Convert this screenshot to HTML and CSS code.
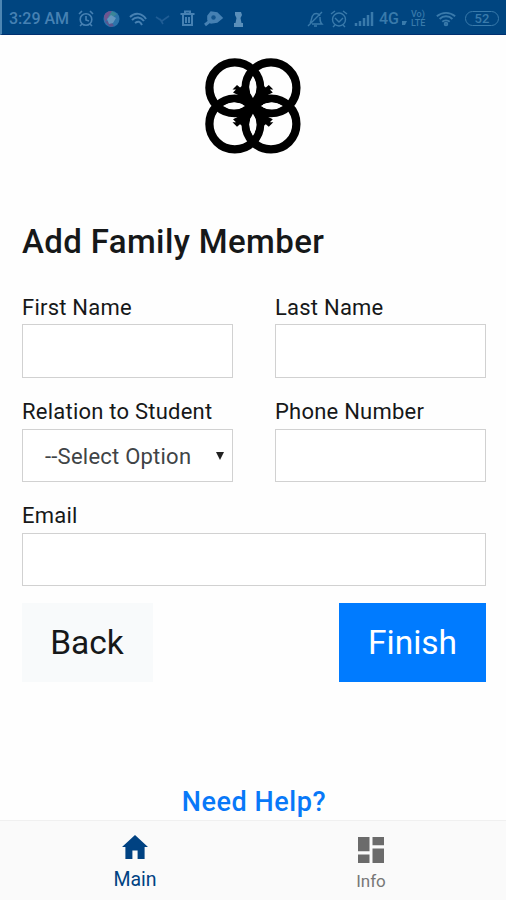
FILE: index.html
```html
<!DOCTYPE html>
<html lang="en">
<head>
<meta charset="utf-8">
<title>Add Family Member</title>
<link rel="stylesheet" href="styles.css">
</head>
<body>
<div class="status">
  <span class="time">3:29 AM</span>
  <svg class="st-left" width="172" height="20" viewBox="0 0 172 20" fill="none" stroke="#4681b3" stroke-width="1.6">
    <circle cx="9" cy="10.5" r="5.800"/><path d="M9 7v4l3 1M2 5l3-3M13 2l3 3M5 15l-2 2M13 15l2 2"/>
    <g stroke="none"><circle cx="34.500" cy="10" r="8" fill="#2c74ab"/><path d="M27 7a8 8 0 0 1 8-5l-2 5-5 6z" fill="#6f5590"/><path d="M35 2l5 3-4 3-5 0z" fill="#3a8598"/><path d="M28 13l5-2 4 6-4 1z" fill="#5a5690"/><path d="M30 10l4-4 5 3-3 5-4 1z" fill="#6496be"/></g>
    <path d="M53 8c5-5 12-4 16 2M55 11c4-4 9-3 12 1M58 14c3-2 5-2 7 2" stroke-width="2"/>
    <path d="M79 8l6 4 7-5M83 10l3 5" stroke="#1f5d95"/>
    <path d="M103.500 5h14M108 4V2.500h5V4M106 6v10h9V6M109 8v6M112 8v6" stroke-width="2"/>
    <path d="M128 16l5-4" stroke-width="3"/><path d="M131 7l3-4 6 1 5 5-5 4-6 1-3-3z" fill="#4681b3"/><circle cx="136.500" cy="8.500" r="2.200" stroke="none" fill="#13558e"/>
    <path d="M158 3h6l1 3-1.500 3 1 5h1.500v4h-9v-4h1.500l1-5-1.500-3z" fill="#5a8fba" stroke="none"/>
  </svg>
  <svg class="st-signal" width="70" height="20" viewBox="0 0 70 20" fill="none" stroke="#397aab" stroke-width="1.400">
    <path d="M2 17L16 3M4 14c2-2 1-7 4-9 3-1 5 0 6 2M6 15h10c-2-2-2-3-2-7M8 17h3"/>
    <circle cx="33" cy="10.500" r="6.500"/><path d="M29 9l4 4 4-4M25 5l4-3M37 2l4 3M29 16l-2 2M37 16l2 2"/>
    <path d="M50 17v-3M54 17v-5M58 17V9M62 17V6M66 17V3" stroke-width="2.500"/>
  </svg>
  <span class="net">4G</span><svg class="net-dot" width="5" height="5" viewBox="0 0 5 5"><path d="M0 1h5L3 5H0z" fill="#397aab"/></svg>
  <span class="volte"><span>Vo)</span><span>LTE</span></span>
  <svg class="st-wifi" width="22" height="18" viewBox="0 0 24 18" fill="none" stroke="#397aab" stroke-width="2"><path d="M2 6c6-5 14-5 20 0M5 9c4-4 10-4 14 0M8 12c2-2 6-2 8 0"/><circle cx="12" cy="14.500" r="1.500"/></svg>
  <span class="battery">52</span>
</div>
<main class="page">
  <svg class="logo" width="96" height="96" viewBox="0 0 96 96">
    <g fill="none" stroke="#000" stroke-width="8.300"><circle cx="29.800" cy="29.800" r="25.400"/><circle cx="66" cy="29.800" r="25.400"/><circle cx="29.800" cy="66" r="25.400"/><circle cx="66" cy="66" r="25.400"/></g>
    <path id="corner" d="M27.500 31.500l4.500-4.500 3 2.500 4-3 4 8 5 3v10H38l-4-10-6-3 3-3z"/>
    <use href="#corner" transform="matrix(-1 0 0 1 95.800 0)"/>
    <use href="#corner" transform="matrix(1 0 0 -1 0 95.800)"/>
    <use href="#corner" transform="matrix(-1 0 0 -1 95.800 95.800)"/>
    <path d="M39 39h18v18H39z"/>
    <path id="lens" d="M47.900 18q7.400 11 0 22q-7.400-11 0-22z" fill="#fefefe"/>
    <use href="#lens" transform="rotate(90 47.900 47.900)"/>
    <use href="#lens" transform="rotate(180 47.900 47.900)"/>
    <use href="#lens" transform="rotate(270 47.900 47.900)"/>
  </svg>
  <h1 class="title">Add Family Member</h1>
  <form class="form">
    <label class="field"><span>First Name</span><input class="box" type="text"></label>
    <label class="field"><span>Last Name</span><input class="box" type="text"></label>
    <label class="field"><span>Relation to Student</span><span class="box select"><span class="option">--Select Option</span><svg width="8" height="8" viewBox="0 0 8 8"><path d="M0 0h8L4 8z" fill="#222"/></svg></span></label>
    <label class="field"><span>Phone Number</span><input class="box" type="text"></label>
    <label class="field wide"><span>Email</span><input class="box" type="text"></label>
  </form>
  <div class="actions"><button class="btn back">Back</button><button class="btn finish">Finish</button></div>
  <a class="help">Need Help?</a>
</main>
<nav class="tabs">
  <a class="tab main"><svg width="26" height="24" viewBox="0 0 26 24"><path d="M13 0L0 12h3.400v12h7v-8.500h5.200V24h7V12H26z" fill="#004282"/></svg><span>Main</span></a>
  <a class="tab info"><svg width="26" height="26" viewBox="0 0 26 26" fill="#6b6b6b"><path d="M0 0h11.500v14.300H0zM14.500 0H26v8.300H14.500zM0 17.500h11.500V26H0zM14.500 11.500H26V26H14.500z"/></svg><span>Info</span></a>
</nav>
</body>
</html>
```
FILE: styles.css
```css
* { box-sizing: border-box; }
body { margin: 0; width: 506px; height: 900px; display: flex; flex-direction: column; overflow: hidden; background: #fefefe; color: #161819; font-family: Roboto, "Liberation Sans", sans-serif; }
.status { height: 35px; flex: none; display: flex; align-items: center; background: #004580; border-bottom: 1px solid #003070; border-left: 2px solid #4d86b3; color: #4681b3; padding: 3px 7px 0 7px; }
.status > * { flex: none; }
.time { width: 68px; font-size: 16px; font-weight: 500; white-space: nowrap; }
.st-signal { margin-left: 57px; }
.net { width: 22px; margin-left: 3px; font-size: 16px; font-weight: 500; color: #397aab; }
.net-dot { margin: 7px 0 0 1px; }
.volte { display: flex; flex-direction: column; width: 18px; margin-left: 4px; font-size: 9px; line-height: 9px; font-weight: 500; color: #397aab; }
.st-wifi { margin-left: 6px; }
.battery { width: 34px; height: 15px; margin-left: 8px; border: 1.5px solid #397aab; border-radius: 8px; color: #397aab; font-size: 13px; line-height: 13px; font-weight: 500; text-align: center; }
.page { flex: 1; display: flex; flex-direction: column; padding: 23px 20px 0 22px; }
.logo { margin-left: 183px; flex: none; }
.title { margin: 68px 0 0; height: 40px; line-height: 40px; font-size: 33px; font-weight: 500; letter-spacing: .38px; white-space: nowrap; }
.form { display: grid; grid-template-columns: 211px 211px; justify-content: space-between; row-gap: 19px; margin-top: 31px; }
.field { display: flex; flex-direction: column; font-size: 22px; line-height: 30px; letter-spacing: .23px; white-space: nowrap; }
.field > span:first-child { margin-bottom: 1px; }
.field .box { height: 54px; }
.field:nth-child(n+3) > span:first-child { margin-bottom: 2px; }
.field:nth-child(n+3) .box { height: 53px; }
.wide { grid-column: 1 / 3; }
.box { width: 100%; border: 1.500px solid #d1d1d1; border-radius: 0; background: #fff; padding: 0; outline: 0; }
.select { display: flex; align-items: center; justify-content: space-between; padding: 2px 8px 0 22px; color: #404446; }
.select svg { margin-bottom: 2px; }
.actions { display: flex; justify-content: space-between; margin-top: 17px; }
.btn { height: 79px; border: 0; padding: 0; font: 400 33.500px Roboto, sans-serif; }
.back { width: 131px; padding-right: 1px; background: #f8fafb; color: #161819; }
.finish { width: 147px; background: #007bff; color: #fff; }
.help { align-self: center; margin-top: 102px; line-height: 36px; font-size: 27px; font-weight: 500; letter-spacing: .55px; color: #0878f8; }
.tabs { height: 80px; flex: none; display: grid; grid-template-columns: 270px 202px; background: #fafafa; border-top: 1px solid #f0f0f0; }
.tab { display: flex; flex-direction: column; align-items: center; }
.main { padding-top: 14px; color: #004282; font-size: 19.500px; }
.main span { margin-top: 9px; line-height: 24px; }
.info { padding-top: 16px; color: #777; font-size: 17px; }
.info span { margin-top: 6px; line-height: 24px; }
```
